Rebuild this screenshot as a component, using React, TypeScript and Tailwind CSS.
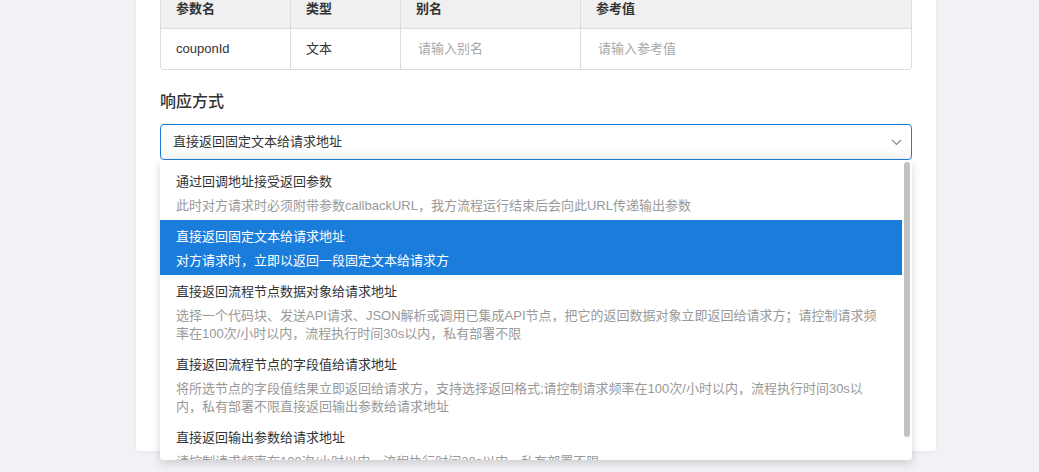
import React from "react";

const items = [
  {
    title: "通过回调地址接受返回参数",
    desc: ["此时对方请求时必须附带参数callbackURL，我方流程运行结束后会向此URL传递输出参数"],
  },
  {
    title: "直接返回固定文本给请求地址",
    desc: ["对方请求时，立即以返回一段固定文本给请求方"],
    active: true,
  },
  {
    title: "直接返回流程节点数据对象给请求地址",
    desc: [
      "选择一个代码块、发送API请求、JSON解析或调用已集成API节点，把它的返回数据对象立即返回给请求方；请控制请求频",
      "率在100次/小时以内，流程执行时间30s以内，私有部署不限",
    ],
  },
  {
    title: "直接返回流程节点的字段值给请求地址",
    desc: [
      "将所选节点的字段值结果立即返回给请求方，支持选择返回格式;请控制请求频率在100次/小时以内，流程执行时间30s以",
      "内，私有部署不限直接返回输出参数给请求地址",
    ],
  },
  {
    title: "直接返回输出参数给请求地址",
    desc: ["请控制请求频率在100次/小时以内，流程执行时间30s以内，私有部署不限"],
  },
];

export default function App() {
  return (
    <div
      className="w-[1039px] h-[472px] bg-[#f2f2f6] overflow-hidden"
      style={{ fontFamily: '"Liberation Sans", "Noto Sans CJK SC", sans-serif' }}
    >
      <div className="ml-[136px] w-[800px] h-[463px] bg-white rounded-b-[4px] shadow-[0_1px_4px_rgba(0,0,0,0.06)] px-6 overflow-visible">
        {/* table */}
        <div className="mt-[-12px] border border-[#dcdcdc] rounded-[4px] overflow-hidden text-[13px] text-[#333]">
          <div className="flex h-[40px] bg-[#f0f0f0] border-b border-[#dcdcdc] font-bold">
            <div className="w-[130px] border-r border-[#dcdcdc] pl-[15px] flex items-center">参数名</div>
            <div className="w-[110px] border-r border-[#dcdcdc] pl-[15px] flex items-center">类型</div>
            <div className="w-[180px] border-r border-[#dcdcdc] pl-[15px] flex items-center">别名</div>
            <div className="flex-1 pl-[15px] flex items-center">参考值</div>
          </div>
          <div className="flex h-[40px]">
            <div className="w-[130px] border-r border-[#dcdcdc] pl-[15px] flex items-center">couponId</div>
            <div className="w-[110px] border-r border-[#dcdcdc] pl-[15px] flex items-center">文本</div>
            <div className="w-[180px] border-r border-[#dcdcdc] pl-[17px] flex items-center text-[#a8a8a8]">请输入别名</div>
            <div className="flex-1 pl-[17px] flex items-center text-[#a8a8a8]">请输入参考值</div>
          </div>
        </div>

        <div className="mt-[20px] text-[16px] leading-[24px] font-medium text-[#333]">响应方式</div>

        <div className="relative mt-[10px]">
          <div className="h-[36px] border border-[#1a7fdc] rounded-[4px] flex items-center justify-between pl-[12px] pr-[9px] text-[13px] text-[#333] bg-gradient-to-b from-white from-60% to-[#f7f7f7]">
            <span>直接返回固定文本给请求地址</span>
            <svg width="11" height="7" viewBox="0 0 11 7" fill="none">
              <path d="M1 1l4.5 4.5L10 1" stroke="#8a8a8a" strokeWidth="1.2" />
            </svg>
          </div>

          <div className="absolute left-0 top-[36px] w-full h-[300px] bg-white rounded-[4px] shadow-[0_3px_10px_rgba(0,0,0,0.16)] overflow-hidden flex">
            <div className="flex-1 pt-[5px]">
              {items.map((it) => (
                <div
                  key={it.title}
                  className={
                    it.active
                      ? "bg-[#1a7ddb] text-white pl-4 pt-[6px] pb-[5px]"
                      : "pl-4 pt-[6px] pb-[5px]"
                  }
                >
                  <div className={it.active ? "text-[13px] leading-[22px] text-white" : "text-[13px] leading-[22px] text-[#333]"}>
                    {it.title}
                  </div>
                  <div className={it.active ? "mt-[4px] text-[13px] leading-[18px] text-white" : "mt-[4px] text-[13px] leading-[18px] text-[#999]"}>
                    {it.desc.map((d) => (
                      <div key={d} className="whitespace-nowrap">{d}</div>
                    ))}
                  </div>
                </div>
              ))}
            </div>
            <div className="w-[10px] pt-[2px] flex justify-center">
              <div className="w-[6px] h-[275px] rounded-full bg-[#c1c1c1]" />
            </div>
          </div>
        </div>
      </div>
    </div>
  );
}
